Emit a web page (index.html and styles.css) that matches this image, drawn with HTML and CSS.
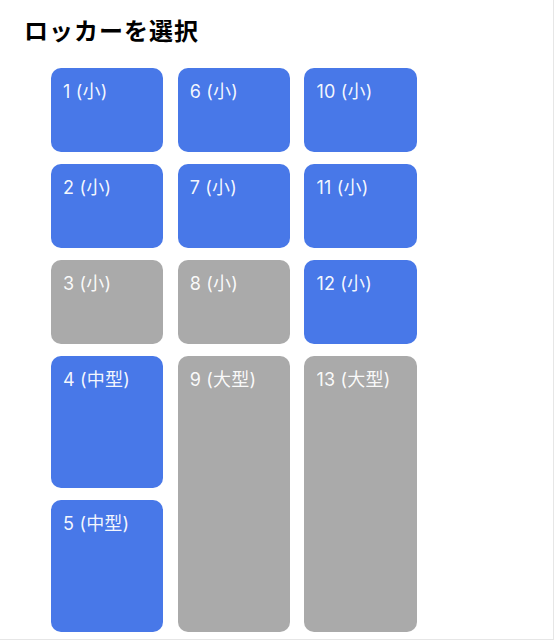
FILE: index.html
```html
<!DOCTYPE html>
<html lang="ja">
<head>
<meta charset="utf-8">
<link rel="stylesheet" href="styles.css">
</head>
<body>
<div class="page">
  <h1 class="title">ロッカーを選択</h1>
  <div class="grid">
    <div class="locker s free">1 (小)</div>
    <div class="locker s free">2 (小)</div>
    <div class="locker s used">3 (小)</div>
    <div class="locker m free">4 (中型)</div>
    <div class="locker m free">5 (中型)</div>
    <div class="locker s free">6 (小)</div>
    <div class="locker s free">7 (小)</div>
    <div class="locker s used">8 (小)</div>
    <div class="locker l used">9 (大型)</div>
    <div class="locker s free">10 (小)</div>
    <div class="locker s free">11 (小)</div>
    <div class="locker s free">12 (小)</div>
    <div class="locker l used">13 (大型)</div>
  </div>
</div>
</body>
</html>
```
FILE: styles.css
```css
html, body {
  margin: 0;
  padding: 0;
  background: #ffffff;
}
.page {
  box-sizing: border-box;
  width: 554px;
  height: 640px;
  border-right: 1px solid #e6e6e6;
  border-bottom: 1px solid #e6e6e6;
  padding: 14px 0 0 24px;
  font-family: "Inter", "Noto Sans CJK JP", sans-serif;
  overflow: hidden;
}
.title {
  margin: 0;
  font-family: "Noto Sans CJK JP", sans-serif;
  font-size: 24px;
  line-height: 32px;
  letter-spacing: 1px;
  font-weight: 700;
  color: #000;
}
.grid {
  display: grid;
  grid-template-columns: repeat(3, 112.3px);
  grid-template-rows: repeat(12, 36px);
  grid-auto-flow: column;
  column-gap: 14.4px;
  row-gap: 12px;
  margin: 22px 0 0 27px;
}
.locker {
  box-sizing: border-box;
  border-radius: 10px;
  padding: 12px 12px;
  font-size: 18px;
  line-height: 24px;
  letter-spacing: 0.2px;
  color: rgba(255, 255, 255, 0.95);
}
.s { grid-row: span 2; }
.m { grid-row: span 3; }
.l { grid-row: span 6; }
.free { background: #4878e8; }
.used { background: #aaaaaa; }
```
